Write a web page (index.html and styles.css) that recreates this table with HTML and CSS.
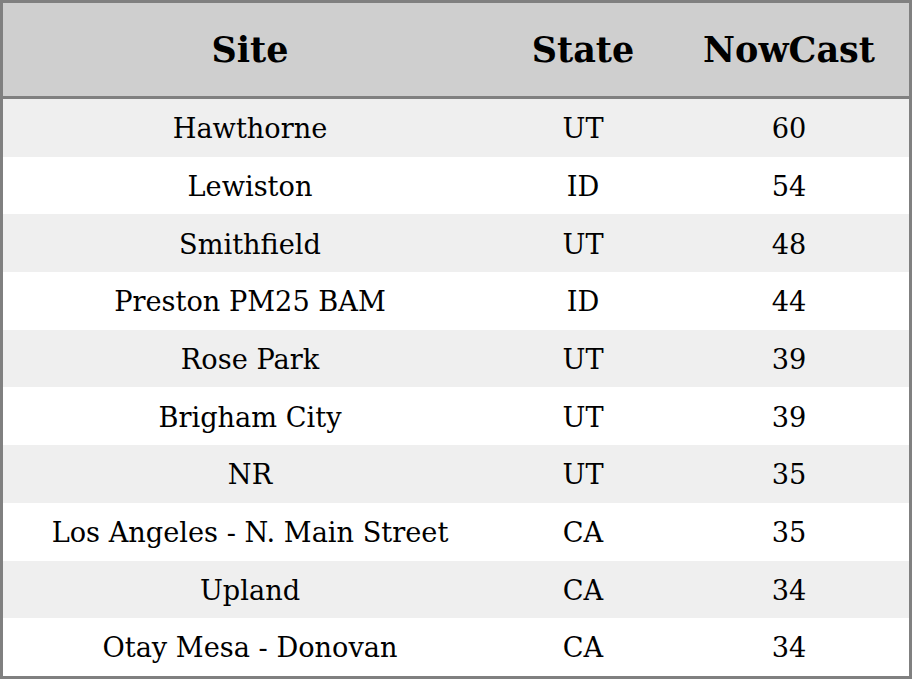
FILE: index.html
```html
<!DOCTYPE html>
<html>
<head>
<meta charset="utf-8">
<link rel="stylesheet" href="styles.css">
</head>
<body>
<table class="aq-table">
  <colgroup>
    <col class="col-site">
    <col class="col-state">
    <col class="col-nowcast">
  </colgroup>
  <thead>
    <tr class="head-row"><th>Site</th><th>State</th><th>NowCast</th></tr>
  </thead>
  <tbody>
    <tr class="data-row"><td>Hawthorne</td><td>UT</td><td>60</td></tr>
    <tr class="data-row"><td>Lewiston</td><td>ID</td><td>54</td></tr>
    <tr class="data-row"><td>Smithfield</td><td>UT</td><td>48</td></tr>
    <tr class="data-row"><td>Preston PM25 BAM</td><td>ID</td><td>44</td></tr>
    <tr class="data-row"><td>Rose Park</td><td>UT</td><td>39</td></tr>
    <tr class="data-row"><td>Brigham City</td><td>UT</td><td>39</td></tr>
    <tr class="data-row"><td>NR</td><td>UT</td><td>35</td></tr>
    <tr class="data-row"><td>Los Angeles - N. Main Street</td><td>CA</td><td>35</td></tr>
    <tr class="data-row"><td>Upland</td><td>CA</td><td>34</td></tr>
    <tr class="data-row"><td>Otay Mesa - Donovan</td><td>CA</td><td>34</td></tr>
  </tbody>
</table>
</body>
</html>
```

FILE: styles.css
```css
html, body {
  margin: 0;
  padding: 0;
  background: #ffffff;
}

.aq-table {
  width: 912px;
  border-collapse: separate;
  border-spacing: 0;
  border: 3px solid #808080;
  table-layout: fixed;
  font-family: "DejaVu Serif", serif;
  color: #000000;
}

.col-site { width: 494px; }
.col-state { width: 172px; }
.col-nowcast { width: 240px; }

.head-row { height: 96px; }

.aq-table th {
  padding: 0;
  background: #cfcfcf;
  border-bottom: 3px solid #808080;
  font-size: 35px;
  font-weight: bold;
  line-height: 1;
  text-align: center;
  vertical-align: middle;
}

.data-row { height: 57.7px; }

.aq-table td {
  padding: 2px 0 0 0;
  font-size: 27.2px;
  line-height: 1;
  text-align: center;
  vertical-align: middle;
}

.aq-table tbody tr:nth-child(odd) td {
  background: #efefef;
}
```
